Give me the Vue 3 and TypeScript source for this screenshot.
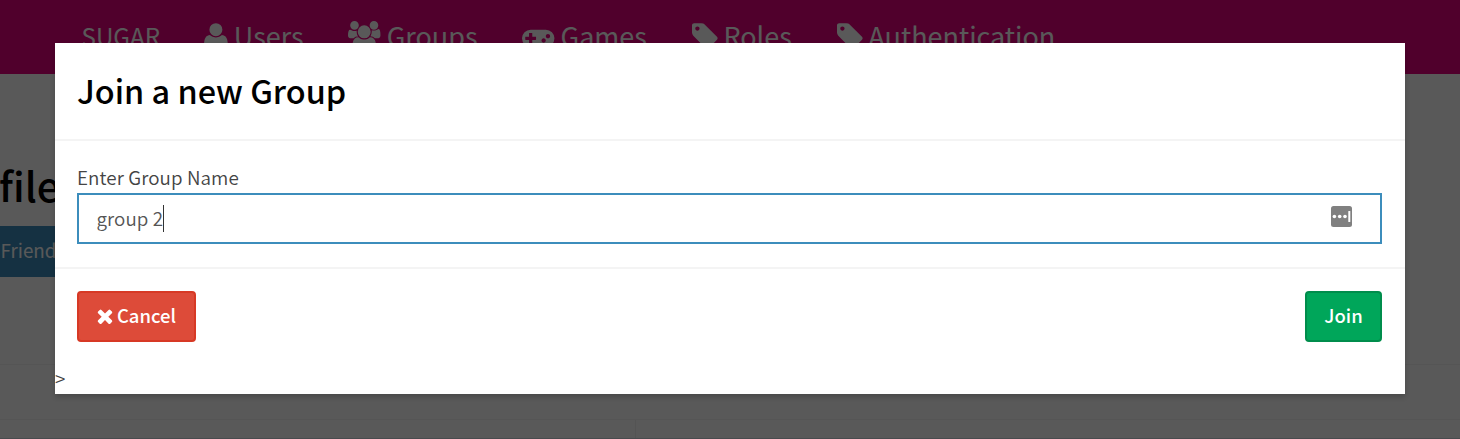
<script setup lang="ts">
import { ref } from 'vue'

interface NavItem {
  label: string
  width: number
  path: string
}

const tag =
  'M448 448q0-53-37.5-90.5t-90.5-37.5-90.5 37.5-37.5 90.5 37.5 90.5 90.5 37.5 90.5-37.5 37.5-90.5zm1067 576q0 53-37 90l-491 492q-39 37-91 37-53 0-90-37l-715-716q-38-37-64.5-101t-26.5-117v-416q0-52 38-90t90-38h416q53 0 117 26.5t102 64.5l715 714q37 39 37 91z'

const items: NavItem[] = [
  {
    label: 'Users',
    width: 1408,
    path: 'M1408 1405q0 120-73 189.5t-194 69.5h-874q-121 0-194-69.5t-73-189.5q0-53 3.5-103.5t14-109 26.5-108.5 43-97.5 62-81 85.5-53.5 111.5-20q9 0 42 21.5t74.5 48 108 48 133.5 21.5 133.5-21.5 108-48 74.5-48 42-21.5q61 0 111.5 20t85.5 53.5 62 81 43 97.5 26.5 108.5 14 109 3.5 103.5zm-320-893q0 159-112.5 271.5t-271.5 112.5-271.5-112.5-112.5-271.5 112.5-271.5 271.5-112.5 271.5 112.5 112.5 271.5z',
  },
  {
    label: 'Groups',
    width: 1920,
    path: 'M593 896q-162 5-265 128h-134q-82 0-138-40.5t-56-118.5q0-353 124-353 6 0 43.5 21t97.5 42.5 119 21.5q67 0 133-23-5 37-5 66 0 159 81 290zm1071 637q0 120-73 189.5t-194 69.5h-874q-121 0-194-69.5t-73-189.5q0-53 3.5-103.5t14-109 26.5-108.5 43-97.5 62-81 85.5-53.5 111.5-20q10 0 43 21.5t73 48 107 48 135 21.5 135-21.5 107-48 73-48 43-21.5q61 0 111.5 20t85.5 53.5 62 81 43 97.5 26.5 108.5 14 109 3.5 103.5zm-1024-1277q0 106-75 181t-181 75-181-75-75-181 75-181 181-75 181 75 75 181zm704 384q0 159-112.5 271.5t-271.5 112.5-271.5-112.5-112.5-271.5 112.5-271.5 271.5-112.5 271.5 112.5 112.5 271.5zm576 225q0 78-56 118.5t-138 40.5h-134q-103-123-265-128 81-131 81-290 0-29-5-66 66 23 133 23 59 0 119-21.5t97.5-42.5 43.5-21q124 0 124 353zm-128-609q0 106-75 181t-181 75-181-75-75-181 75-181 181-75 181 75 75 181z',
  },
  {
    label: 'Games',
    width: 1920,
    path: 'M832 1088v-128q0-14-9-23t-23-9h-192v-192q0-14-9-23t-23-9h-128q-14 0-23 9t-9 23v192h-192q-14 0-23 9t-9 23v128q0 14 9 23t23 9h192v192q0 14 9 23t23 9h128q14 0 23-9t9-23v-192h192q14 0 23-9t9-23zm576 64q0-53-37.5-90.5t-90.5-37.5-90.5 37.5-37.5 90.5 37.5 90.5 90.5 37.5 90.5-37.5 37.5-90.5zm256-256q0-53-37.5-90.5t-90.5-37.5-90.5 37.5-37.5 90.5 37.5 90.5 90.5 37.5 90.5-37.5 37.5-90.5zm256 128q0 212-150 362t-362 150q-192 0-338-128h-220q-146 128-338 128-212 0-362-150t-150-362 150-362 362-150h896q212 0 362 150t150 362z',
  },
  { label: 'Roles', width: 1536, path: tag },
  { label: 'Authentication', width: 1536, path: tag },
]

const groupName = ref('group 2')
</script>

<template>
  <div class="screen">
    <div class="page">
      <nav class="navbar">
        <span class="brand">SUGAR</span>
        <a v-for="item in items" :key="item.label" class="nav-item">
          <svg :viewBox="`0 0 ${item.width} 1792`" :width="(item.width / 1792) * 30.3" height="30.3">
            <path :d="item.path" />
          </svg>
          <span>{{ item.label }}</span>
        </a>
      </nav>
      <h1 class="profile-title">file</h1>
      <div class="friends">Friends</div>
      <div class="table">
        <div class="row head"></div>
        <div class="row"><i></i><i></i></div>
      </div>
    </div>

    <div class="backdrop">
      <section class="modal">
        <header><h2>Join a new Group</h2></header>
        <div class="body">
          <label>Enter Group Name</label>
          <div class="field">
            <span class="value">{{ groupName }}</span><span class="caret"></span>
            <svg class="filler" width="21" height="21" viewBox="0 0 21 21">
              <rect width="21" height="21" rx="2.5" fill="#808080" />
              <g fill="#fff">
                <circle cx="3.4" cy="10.5" r="1.8" />
                <circle cx="8.7" cy="10.5" r="1.8" />
                <circle cx="14" cy="10.5" r="1.8" />
                <rect x="17.3" y="5" width="2" height="11" rx=".5" />
              </g>
            </svg>
          </div>
        </div>
        <footer>
          <button class="btn cancel">
            <svg width="16" height="16" viewBox="110 238 1188 1316"><path d="M1298 1322q0 40-28 68l-136 136q-28 28-68 28t-68-28l-294-294-294 294q-28 28-68 28t-68-28l-136-136q-28-28-28-68t28-68l294-294-294-294q-28-28-28-68t28-68l136-136q28-28 68-28t68 28l294 294 294-294q28-28 68-28t68 28l136 136q28 28 28 68t-28 68l-294 294 294 294q28 28 28 68z" /></svg>
            <span>Cancel</span>
          </button>
          <button class="btn join"><span>Join</span></button>
        </footer>
        <div class="stray">&gt;</div>
      </section>
    </div>
  </div>
</template>

<style>
body {
  margin: 0;
  overflow: hidden;
}
</style>

<style scoped>
* {
  box-sizing: border-box;
}
.screen {
  position: relative;
  width: 1460px;
  height: 439px;
  overflow: hidden;
  font-family: 'Noto Sans CJK SC', 'Noto Sans', sans-serif;
  background: #fff;
}
.page {
  height: 439px;
}
.navbar {
  height: 74px;
  padding-left: 81.5px;
  display: flex;
  align-items: center;
  white-space: nowrap;
  background: #e6007e;
  color: #fff;
}
.brand {
  width: 78px;
  padding-bottom: 4px;
  font-size: 24.2px;
}
.nav-item {
  margin-left: 44.7px;
  display: flex;
  align-items: center;
  gap: 5.8px;
  font-size: 27px;
}
.nav-item span {
  padding-bottom: 4px;
}
.nav-item svg {
  flex: none;
  margin-bottom: 2px;
  fill: currentColor;
}
.profile-title {
  margin: 81px 0 0 -1px;
  height: 71px;
  line-height: 60px;
  font-size: 40.6px;
  font-weight: 500;
  color: #000;
}
.friends {
  width: 120px;
  height: 51px;
  padding-left: 0.5px;
  line-height: 48px;
  background: #3c8dbc;
  color: #fff;
  font-size: 18.8px;
}
.table {
  margin-top: 87px;
  border-top: 1px solid #f4f4f4;
}
.row {
  height: 19px;
  display: grid;
  grid-template-columns: 635px 1fr;
  border-bottom: 1px solid #d2d6de;
}
.row.head {
  height: 55px;
  border-bottom: 1px solid #f4f4f4;
}
.row i + i {
  border-left: 1px solid #f0f0f0;
}
.backdrop {
  position: absolute;
  inset: 0;
  padding: 43px 55px 45px;
  background: rgba(0, 0, 0, 0.65);
}
.modal {
  height: 351px;
  background: #fff;
  box-shadow: 0 3px 5px rgba(0, 0, 0, 0.18);
  color: #444;
}
header {
  height: 98px;
  padding: 0 22px;
  border-bottom: 2px solid #f4f4f4;
}
h2 {
  margin: 0;
  line-height: 94px;
  font-size: 32.4px;
  font-weight: 500;
  color: #000;
}
.body {
  height: 128px;
  padding: 22px 23px 0 22px;
  border-bottom: 2px solid #f4f4f4;
}
label {
  display: block;
  height: 30px;
  line-height: 28px;
  font-size: 18.8px;
  font-weight: 350;
  letter-spacing: 0.1px;
}
.field {
  height: 51px;
  padding: 0 28px 0 17.4px;
  display: flex;
  align-items: center;
  border: 2px solid #3c8dbc;
  color: #555;
  font-size: 18.8px;
  font-weight: 350;
  letter-spacing: 0.1px;
}
.value {
  padding-bottom: 2px;
}
.caret {
  width: 1px;
  height: 27px;
  background: #333;
}
.filler {
  margin: 0 0 4px auto;
}
footer {
  height: 96px;
  padding: 22px 23px 0 22px;
  display: flex;
  align-items: flex-start;
  justify-content: space-between;
}
.btn {
  height: 51px;
  padding: 0;
  display: flex;
  align-items: center;
  justify-content: center;
  gap: 4px;
  border: 2px solid;
  border-radius: 4px;
  color: #fff;
  font: 500 18.5px 'Noto Sans CJK SC', 'Noto Sans', sans-serif;
}
.btn span {
  padding-bottom: 4px;
}
.btn svg {
  margin-bottom: 2px;
  fill: #fff;
}
.cancel {
  width: 119px;
  background: #dd4b39;
  border-color: #d73925;
}
.join {
  width: 77px;
  background: #00a65a;
  border-color: #008d4c;
}
.stray {
  height: 29px;
  line-height: 26px;
  font-size: 18.8px;
  font-weight: 350;
}
</style>
